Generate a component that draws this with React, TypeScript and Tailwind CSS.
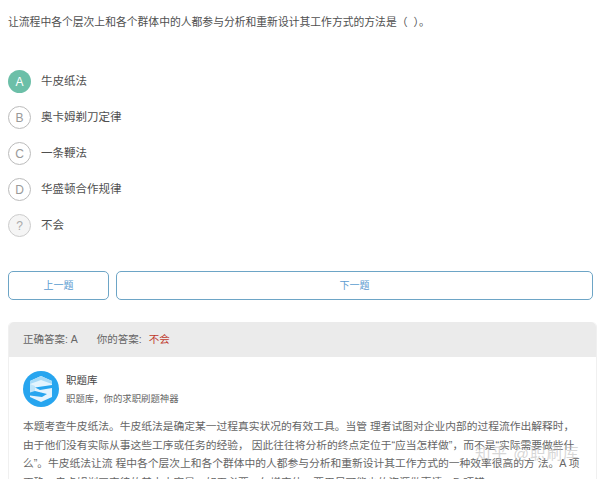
const font = { fontFamily: '"Liberation Sans", "Noto Sans CJK SC", sans-serif' };

const options = [
  { k: "A", t: "牛皮纸法", on: true },
  { k: "B", t: "奥卡姆剃刀定律" },
  { k: "C", t: "一条鞭法" },
  { k: "D", t: "华盛顿合作规律" },
  { k: "?", t: "不会", q: true },
];

function Logo() {
  return (
    <svg width="36" height="36" viewBox="0 0 36 36" className="shrink-0">
      <circle cx="18" cy="18" r="18" fill="#27a5ef" />
      <path d="M18 5 L29 10 V26 L18 31 L7 26 V10 Z" fill="#e4f4fe" />
      <path d="M18 5 L29 10 V13 L18 9 L7 13 V10 Z" fill="#a8dbf8" />
      <path d="M7 13 L12 15 V22 L7 24 Z" fill="#bfe5fb" />
      <path d="M29 14 V17 L17 19 L12 16.5 Z" fill="#27a5ef" />
      <path d="M7 21.5 V24.5 L19 26 L24 23 L12 20 Z" fill="#27a5ef" />
    </svg>
  );
}

export default function App() {
  return (
    <div className="relative w-[600px] h-[479px] overflow-hidden bg-white text-[#555]" style={font}>
      <p className="pl-2 pt-[14px] text-[10.8px] leading-[16px] text-[#4f4f4f]">
        让流程中各个层次上和各个群体中的人都参与分析和重新设计其工作方式的方法是（{"\u00a0\u00a0"}）。
      </p>
      <div className="mt-[40px] flex flex-col gap-[13px] pl-2">
        {options.map((o) => (
          <div key={o.k} className="flex h-[23px] items-center gap-[10px]">
            <span
              className={
                o.on
                  ? "flex h-[23px] w-[23px] items-center justify-center rounded-full bg-[#6cbfa8] text-[12px] text-white"
                  : o.q
                    ? "flex h-[23px] w-[23px] items-center justify-center rounded-full border border-[#ccc] bg-[#f5f5f5] text-[12px] text-[#aaa]"
                    : "flex h-[23px] w-[23px] items-center justify-center rounded-full border border-[#bbb] text-[12px] text-[#999]"
              }
            >
              {o.k}
            </span>
            <span className="text-[11.5px] text-[#4f4f4f]">{o.t}</span>
          </div>
        ))}
      </div>
      <div className="mt-[34px] flex gap-[7px] pl-2 pr-[7px]">
        <button className="h-[29px] w-[101px] rounded-[5px] border border-[#6da5c6] text-[10px] text-[#5b9bd0]">上一题</button>
        <button className="h-[29px] flex-1 rounded-[5px] border border-[#6da5c6] text-[10px] text-[#5b9bd0]">下一题</button>
      </div>
      <div className="mx-2 mt-[22px] mr-[3px] rounded-t-[5px] border-x border-[#f0f0f0]">
        <div className="flex h-[35px] items-center gap-[19px] rounded-t-[5px] bg-[#ebebeb] pl-[14px] text-[10.5px] text-[#666]">
          <span>正确答案: A</span>
          <span>
            你的答案: <span className="ml-[4px] text-[#c0392b]">不会</span>
          </span>
        </div>
        <div className="px-[14px] pt-[14px]">
          <div className="flex items-center gap-[7px]">
            <Logo />
            <div>
              <div className="text-[10.5px] leading-[14px] text-[#444]">职题库</div>
              <div className="mt-[5px] text-[9.4px] leading-[14px] text-[#666]">职题库，你的求职刷题神器</div>
            </div>
          </div>
          <p className="mt-[10px] w-[560px] text-[10.75px] leading-[18.5px] text-[#666] whitespace-nowrap">
            本题考查牛皮纸法。牛皮纸法是确定某一过程真实状况的有效工具。当管 理者试图对企业内部的过程流作出解释时，<br />
            由于他们没有实际从事这些工序或任务的经验， 因此往往将分析的终点定位于“应当怎样做”，而不是“实际需要做些什<br />
            么”。牛皮纸法让流 程中各个层次上和各个群体中的人都参与分析和重新设计其工作方式的一种效率很高的方 法。A 项<br />
            正确。奥卡姆剃刀定律的基本内容是：如无必要，勿增实体，要用尽可能少的资源做事情。B 项错
          </p>
        </div>
      </div>
      <div className="absolute left-[475px] top-[442px] text-[15.5px] tracking-[1px] text-[#bbb]/60">知乎 @职刷库</div>
    </div>
  );
}
